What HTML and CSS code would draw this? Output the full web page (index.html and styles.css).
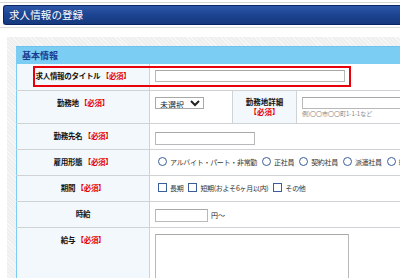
FILE: index.html
```html
<!DOCTYPE html>
<html lang="ja">
<head>
    <meta charset="UTF-8">
    <title>求人情報の登録</title>
    <link rel="stylesheet" href="styles.css">
</head>
<body>
    <div class="page-head">
        <h1>求人情報の登録</h1>
    </div>

    <div class="panel">
        <h2 class="panel-title">基本情報</h2>
        <div class="form-wrap">
            <table class="form-table">
                <tr class="row-title">
                    <th>求人情報のタイトル <span class="req">【必須】</span></th>
                    <td><input type="text" class="inp inp-title"></td>
                </tr>
                <tr class="row-place">
                    <th>勤務地 <span class="req">【必須】</span></th>
                    <td class="split">
                        <div class="split-row">
                            <div class="split-sel">
                                <select class="sel"><option>未選択</option></select>
                            </div>
                            <div class="split-label">
                                <span>勤務地詳細</span>
                                <span class="req">【必須】</span>
                            </div>
                            <div class="split-input">
                                <input type="text" class="inp inp-addr">
                                <p class="hint">例)〇〇市〇〇町1-1-1など</p>
                            </div>
                        </div>
                    </td>
                </tr>
                <tr class="row-std">
                    <th>勤務先名 <span class="req">【必須】</span></th>
                    <td><input type="text" class="inp inp-name"></td>
                </tr>
                <tr class="row-std">
                    <th>雇用形態 <span class="req">【必須】</span></th>
                    <td>
                        <div class="opts">
                            <label><span class="radio"></span>アルバイト・パート・非常勤</label>
                            <label><span class="radio"></span>正社員</label>
                            <label><span class="radio"></span>契約社員</label>
                            <label><span class="radio"></span>派遣社員</label>
                            <label><span class="radio"></span>紹介予定派遣</label>
                        </div>
                    </td>
                </tr>
                <tr class="row-std">
                    <th>期間 <span class="req">【必須】</span></th>
                    <td>
                        <div class="opts">
                            <label><span class="check"></span>長期</label>
                            <label><span class="check"></span>短期(およそ6ヶ月以内)</label>
                            <label><span class="check"></span>その他</label>
                        </div>
                    </td>
                </tr>
                <tr class="row-std">
                    <th>時給</th>
                    <td><input type="text" class="inp inp-wage"><span class="unit">円～</span></td>
                </tr>
                <tr class="row-pay">
                    <th>給与 <span class="req">【必須】</span></th>
                    <td><textarea class="inp area"></textarea></td>
                </tr>
            </table>
            <!-- highlight around the title row -->
            <div class="mark"></div>
        </div>
    </div>
</body>
</html>
```
FILE: styles.css
```css
body {
    margin: 0;
    padding: 0;
    background-color: #fff;
    font-family: "Noto Sans CJK JP", "Liberation Sans", sans-serif;
    color: #222;
    overflow: hidden;
    width: 400px;
    height: 278px;
}

.page-head {
    margin-top: 2px;
    padding: 2px 0 2px 3px;
    border-top: 1px solid #d8d8d8;
    border-bottom: 1px solid #dcdcdc;
    width: 600px;
}

.page-head h1 {
    margin: 0;
    height: 18px;
    line-height: 18px;
    padding-left: 5px;
    font-size: 10.5px;
    font-weight: normal;
    color: #fff;
    background: linear-gradient(#2d57a8, #1d4593 45%, #17397e);
    border: 1px solid #0d2565;
    border-right: none;
    border-radius: 3px 0 0 3px;
    letter-spacing: 0.1px;
}

.panel {
    margin: 9px 0 0 7px;
    padding: 9px 0 0 9px;
    width: 600px;
    background-color: #efefef;
    background-image: repeating-linear-gradient(45deg, rgba(255,255,255,0.5) 0 1px, transparent 1px 3px);
}

.panel-title {
    margin: 0;
    height: 17px;
    line-height: 17px;
    padding-left: 6px;
    font-size: 9px;
    font-weight: bold;
    color: #1b3c8e;
    background-color: #7ccdf3;
    border-top: 1px solid #6cc3ee;
}

.form-wrap {
    position: relative;
    background-color: #fff;
}

.form-table {
    border-collapse: collapse;
    width: 100%;
    border-left: 1px solid #7ccdf3;
}

.form-table th {
    width: 132px;
    padding: 7px 0 0;
    vertical-align: top;
    font-size: 7.5px;
    line-height: 10px;
    font-weight: bold;
    letter-spacing: -0.3px;
    text-align: center;
    color: #111;
    background-color: #f3f8fd;
    border-right: 1px solid #cfd3d6;
    border-bottom: 1px solid #cfd3d6;
}

.form-table td {
    padding: 0 0 0 5px;
    vertical-align: top;
    font-size: 7px;
    border-bottom: 1px solid #cfd3d6;
}

.req {
    color: #e60000;
    font-weight: bold;
}

.row-title { height: 26px; }
.row-place { height: 32px; }
.row-std { height: 26px; }
.row-pay { height: 80px; }

.inp {
    display: block;
    box-sizing: border-box;
    margin: 0;
    padding: 0 2px;
    font: inherit;
    background: #fff;
    border: 1px solid #b9b9b9;
    border-top-color: #a8a8a8;
    border-radius: 0;
}

.inp-title {
    margin-top: 6px;
    width: 190px;
    height: 12px;
}

.inp-name {
    margin-top: 8px;
    width: 100px;
    height: 13px;
}

.inp-wage {
    display: inline-block;
    vertical-align: middle;
    margin-top: 7px;
    width: 53px;
    height: 13px;
}

.unit {
    display: inline-block;
    vertical-align: middle;
    margin: 7px 0 0 3px;
    font-size: 7px;
}

.area {
    margin-top: 6px;
    width: 194px;
    height: 48px;
    resize: none;
}

.split {
    padding: 0 !important;
}

.split-row {
    display: flex;
    height: 32px;
}

.split-sel {
    width: 82px;
    padding: 6px 0 0 5px;
    box-sizing: border-box;
}

.sel {
    width: 49px;
    height: 12px;
    padding: 0;
    font-family: inherit;
    font-size: 8px;
    border: 1px solid #a8a8a8;
    border-radius: 0;
    background: #fff;
    color: #222;
}

.split-label {
    width: 65px;
    display: flex;
    flex-direction: column;
    align-items: center;
    padding-top: 6px;
    box-sizing: border-box;
    font-size: 7.5px;
    line-height: 10px;
    font-weight: bold;
    color: #111;
    background-color: #f3f8fd;
    border-left: 1px solid #cfd3d6;
    border-right: 1px solid #cfd3d6;
}

.split-input {
    padding: 6px 0 0 5px;
}

.inp-addr {
    width: 140px;
    height: 12px;
}

.hint {
    margin: 1px 0 0;
    font-size: 6px;
    line-height: 7px;
    color: #888;
}

.opts {
    display: flex;
    gap: 5px;
    padding: 7px 0 0 3px;
    white-space: nowrap;
}

.opts label {
    display: flex;
    align-items: center;
    gap: 3px;
    font-size: 7px;
    line-height: 10px;
    color: #333;
    letter-spacing: -0.3px;
}

.radio {
    display: inline-block;
    width: 7px;
    height: 7px;
    border: 1px solid #3a5e9c;
    border-radius: 50%;
    background: #fff;
}

.check {
    display: inline-block;
    width: 7px;
    height: 7px;
    border: 1px solid #3a5e9c;
    background: #fff;
}

.mark {
    position: absolute;
    left: 17px;
    top: 2px;
    width: 314px;
    height: 17px;
    border: 2px solid #e8000b;
}
```
